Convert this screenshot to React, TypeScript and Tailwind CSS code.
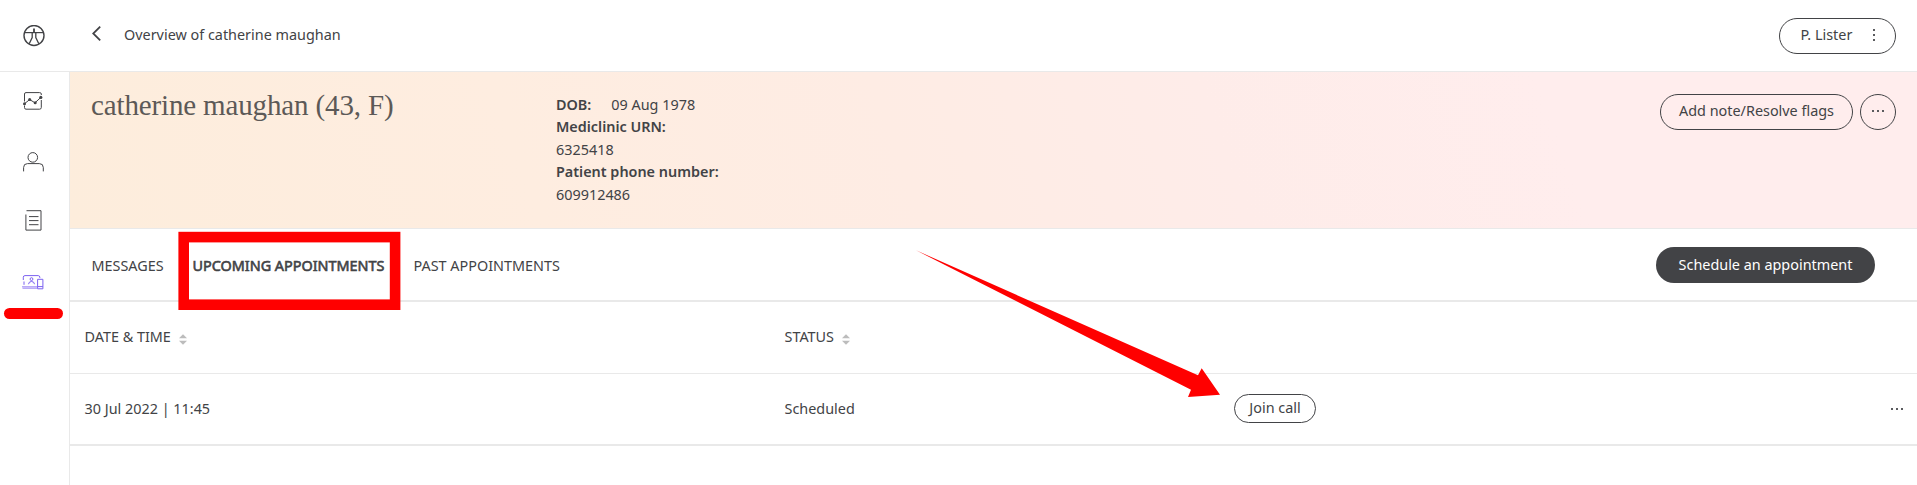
import type { ReactNode } from "react";

function BodyIcon() {
  return (
    <svg className="size-[22px]" viewBox="0 0 22 22" fill="none" stroke="#424346" strokeWidth="1.4">
      <circle cx="11" cy="10.5" r="10" />
      <path d="M1.5 7.6H20.5" strokeWidth="1.2" />
      <path d="M11 3.6V7.6" strokeWidth="1.8" />
      <path d="M9.2 8V12.5L6.2 18.8M12.8 8V12.5L15.8 18.8" strokeWidth="1.3" />
    </svg>
  );
}

function ChartIcon() {
  return (
    <svg className="h-[18px] w-5" viewBox="0 0 20 18" fill="none" stroke="#424346" strokeWidth="1">
      <path d="M1.5 9.5V2Q1.5 .6 3 .6H16.5Q18.3 .6 18.3 2V3M18.3 8V15.5Q18.3 17.2 16.5 17.2H3Q1.5 17.2 1.5 15.5V13.5" />
      <path d="M1.3 11.8L6.7 7.6L12 10.8L17.8 5.4" />
      <g fill="#424346" stroke="none">
        <circle cx="1.5" cy="11.8" r="1.5" />
        <circle cx="6.7" cy="7.6" r="1.5" />
        <circle cx="12.2" cy="10.7" r="1.5" />
        <circle cx="17.8" cy="5.4" r="1.6" />
      </g>
    </svg>
  );
}

function PersonIcon() {
  return (
    <svg className="h-5 w-[21px]" viewBox="0 0 21 20" fill="none" stroke="#424346" strokeWidth="1">
      <circle cx="9.8" cy="5.4" r="4.8" />
      <path d="M.6 19.4V15.5Q.6 11.6 4.5 11.6H16.3Q20.3 11.6 20.3 15.5V19.4" />
    </svg>
  );
}

function DocumentIcon() {
  return (
    <svg className="h-[21px] w-[17px]" viewBox="0 0 17 21" fill="none" stroke="#424346" strokeWidth="1">
      <path d="M1.5 .7H16V20.1H.9V4.5" />
      <path d="M4 6.6H13.5M4 10.6H13.5M4 14.7H13.5" />
    </svg>
  );
}

function DevicesIcon() {
  return (
    <svg className="h-[15px] w-[22px]" viewBox="0 0 22 15" fill="none" stroke="#7c62f0" strokeWidth="1">
      <path d="M2 9.8V6.5M1.3 5V2.2Q1.3 .6 3 .6H16.2Q17.8 .6 17.8 2.2V3" />
      <path d="M0 11.8H15M.5 13.2H15" strokeOpacity=".75" />
      <path d="M15.6 4.3H20.9V13.8H15.6V4.3M15.6 11.6H20.9" />
      <circle cx="9.5" cy="4.1" r="1.4" />
      <path d="M6.5 9.2Q6.8 6.5 9.5 6.5Q12.2 6.5 12.5 9.2" />
    </svg>
  );
}

function SortIcon() {
  return (
    <svg className="mt-1 h-[11px] w-2" viewBox="0 0 8 11" fill="#bcbcbc">
      <path d="M4 .2L8 4.3H0ZM0 6.7H8L4 10.8Z" />
    </svg>
  );
}

function Dots({ vertical = false }: { vertical?: boolean }) {
  return (
    <span className={vertical ? "flex flex-col gap-[2.6px]" : "flex gap-[3px]"}>
      <i className="size-[2px] bg-[#5a5b5e]" />
      <i className="size-[2px] bg-[#5a5b5e]" />
      <i className="size-[2px] bg-[#5a5b5e]" />
    </span>
  );
}

function Sortable({ children }: { children: ReactNode }) {
  return (
    <span className="flex items-center gap-2">
      {children}
      <SortIcon />
    </span>
  );
}

export default function App() {
  return (
    <div className="relative flex h-[485px] w-[1917px] flex-col overflow-hidden bg-white font-['Noto_Sans',sans-serif] text-[14.4px] leading-[22.5px] text-[#424346]">
      <header className="flex h-[72px] shrink-0 items-center border-b border-[#e9e9e9]">
        <div className="flex w-[92px] pl-[23px]">
          <BodyIcon />
        </div>
        <svg className="mb-[4px] h-[15px] w-[9px]" viewBox="0 0 9 15" fill="none" stroke="#424346" strokeWidth="1.8">
          <path d="M8.2 .7L1.2 7.5L8.2 14.3" />
        </svg>
        <h2 className="ml-[23px]">Overview of catherine maughan</h2>
        <button className="mr-[21px] ml-auto flex h-9 w-[117px] items-center rounded-full border border-[#424346] pl-[20.5px]">
          P. Lister
          <span className="mb-px ml-[21px]">
            <Dots vertical />
          </span>
        </button>
      </header>

      <div className="flex min-h-0 flex-1">
        <nav className="flex w-[70px] shrink-0 flex-col items-start border-r border-[#e9e9e9] pt-5 pl-[22px]">
          <div className="ml-[1px]"><ChartIcon /></div>
          <div className="mt-[42px] ml-[1px]"><PersonIcon /></div>
          <div className="mt-[38px] ml-[3px]"><DocumentIcon /></div>
          <div className="mt-[44px]"><DevicesIcon /></div>
        </nav>

        <main className="flex min-w-0 flex-1 flex-col">
          <section className="flex h-[157px] shrink-0 items-start border-b border-[#e9e9e9] bg-[linear-gradient(70deg,#fdeddc_0%,#feede0_25%,#feece4_45%,#feece9_62%,#ffeded_80%)]">
            <h1 className="w-[486px] pt-[15px] pl-[21px] font-['Liberation_Serif',serif] text-[29px] leading-[36px] tracking-[-0.14px] text-[#5c5957]">
              catherine maughan (43, F)
            </h1>
            <div className="w-[200px] pt-[21.5px] whitespace-nowrap">
              <p><b className="mr-5 font-semibold">DOB:</b>09 Aug 1978</p>
              <p className="font-semibold">Mediclinic URN:</p>
              <p>6325418</p>
              <p className="font-semibold">Patient phone number:</p>
              <p>609912486</p>
            </div>
            <div className="mt-[22px] mr-[21px] ml-auto flex gap-[7px]">
              <button className="flex h-9 w-[193px] items-center justify-center rounded-full border border-[#424346] pb-[2px]">
                Add note/Resolve flags
              </button>
              <button className="flex size-9 items-center justify-center rounded-full border border-[#424346] pb-[3px]">
                <Dots />
              </button>
            </div>
          </section>

          <section className="flex h-[73px] shrink-0 items-center border-b-2 border-[#e9e9e9] pl-[21.5px]">
            <span className="w-[101px] pt-[3px]">MESSAGES</span>
            <span className="w-[221px] pt-[3px] [-webkit-text-stroke:0.6px_#424346]">UPCOMING APPOINTMENTS</span>
            <span className="pt-[3px]">PAST APPOINTMENTS</span>
            <button className="mr-[42px] ml-auto h-9 w-[219px] rounded-full bg-[#424346] pt-[1px] text-white">
              Schedule an appointment
            </button>
          </section>

          <div className="flex h-[72px] shrink-0 items-center border-b border-[#e9e9e9] pl-[14.5px]">
            <div className="w-[700px]"><Sortable>DATE &amp; TIME</Sortable></div>
            <Sortable>STATUS</Sortable>
          </div>
          <div className="flex h-[72px] shrink-0 items-center border-b-2 border-[#e9e9e9] pl-[14.5px]">
            <span className="w-[700px]">30 Jul 2022 | 11:45</span>
            <span className="w-[449.5px]">Scheduled</span>
            <button className="mb-px h-[29px] w-[82px] rounded-full border border-[#424346] pb-[2px] leading-[25px]">Join call</button>
            <span className="mr-[14px] ml-auto"><Dots /></span>
          </div>
        </main>
      </div>

      <svg className="absolute top-[230px] left-[177px] h-[81px] w-[225px]" viewBox="177 230 225 81" fill="none" stroke="#ff0000" strokeWidth="10.6">
        <rect x="183.7" y="237.1" width="211.4" height="67.6" />
      </svg>
      <div className="absolute top-[308px] left-[3.5px] h-[11px] w-[59px] rounded-full bg-[#ff0000]" />
      <svg className="absolute top-[250px] left-[916px] h-[148px] w-[305px]" viewBox="916 250 305 148" fill="#ff0000">
        <path d="M916 250.3L1198 375.3L1201.7 368.2L1220 394.7L1188 397L1191 389.7Z" />
      </svg>
    </div>
  );
}
